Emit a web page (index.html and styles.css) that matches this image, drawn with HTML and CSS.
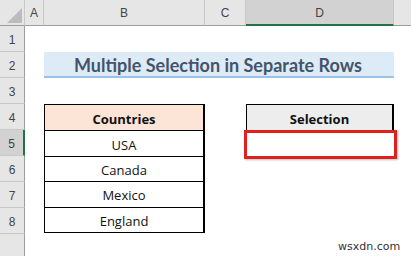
FILE: index.html
```html
<!DOCTYPE html>
<html>
<head>
<meta charset="utf-8">
<link rel="stylesheet" href="styles.css">
</head>
<body>
<div class="sheet">
  <div class="hdr corner"><span class="tri"></span></div>
  <div class="hdr col">A</div>
  <div class="hdr col">B</div>
  <div class="hdr col">C</div>
  <div class="hdr col sel">D</div>
  <div class="hdr col last"></div>

  <div class="hdr row r1">1</div>
  <div class="hdr row r2">2</div>
  <div class="hdr row r3">3</div>
  <div class="hdr row r4">4</div>
  <div class="hdr row r5 rsel">5</div>
  <div class="hdr row r6">6</div>
  <div class="hdr row r7">7</div>
  <div class="hdr row r8">8</div>
  <div class="hdr row r9"></div>

  <div class="title">Multiple Selection in Separate Rows</div>

  <div class="list">
    <div class="item head">Countries</div>
    <div class="item">USA</div>
    <div class="item">Canada</div>
    <div class="item">Mexico</div>
    <div class="item">England</div>
  </div>

  <div class="selhead">Selection</div>
  <div class="selcell"></div>
</div>
<div class="mark">wsxdn.com</div>
</body>
</html>
```
FILE: styles.css
```css
html, body {
  margin: 0;
  padding: 0;
  background: #fff;
  width: 411px;
  height: 256px;
  overflow: hidden;
  font-family: "Open Sans", "Liberation Sans", sans-serif;
}
.sheet {
  display: grid;
  grid-template-columns: 25px 19px 161px 41px 148px 17px;
  grid-template-rows: 26px repeat(8, 26px) 22px;
  position: relative;
}
.hdr {
  box-sizing: border-box;
  background: #e6e6e6;
  color: #444;
  font-size: 12px;
  display: flex;
  align-items: center;
  justify-content: center;
  font-family: "Liberation Sans", sans-serif;
}
.corner {
  grid-column: 1;
  grid-row: 1;
  border-right: 1px solid #c8c8c8;
  border-bottom: 1px solid #9e9e9e;
  position: relative;
}
.tri {
  position: absolute;
  right: 2px;
  bottom: 2px;
  width: 0;
  height: 0;
  border-left: 15px solid transparent;
  border-bottom: 15px solid #bcbcbc;
}
.col {
  grid-row: 1;
  border-right: 1px solid #c8c8c8;
  border-bottom: 1px solid #9e9e9e;
  padding-top: 1px;
}
.col.sel {
  background: #d2d2d2;
  border-bottom: 2px solid #217346;
  color: #444;
}
.col.last {
  border-right: none;
}
.row {
  grid-column: 1;
  border-right: 1px solid #9e9e9e;
  border-bottom: 1px solid #c8c8c8;
  padding-top: 3px;
}
.r1 { grid-row: 2; }
.r2 { grid-row: 3; }
.r3 { grid-row: 4; }
.r4 { grid-row: 5; }
.r5 { grid-row: 6; }
.r6 { grid-row: 7; }
.r7 { grid-row: 8; }
.r8 { grid-row: 9; }
.r9 { grid-row: 10; border-bottom: none; }
.rsel {
  background: #d2d2d2;
  border-right: 2px solid #217346;
}
.title {
  grid-column: 3 / 6;
  grid-row: 3;
  background: #ddebf7;
  border-bottom: 2px solid #9bc2e6;
  color: #44546a;
  font-family: "Lato", "Open Sans", sans-serif;
  font-weight: bold;
  font-size: 18px;
  display: flex;
  align-items: center;
  justify-content: center;
  padding-top: 1px;
  padding-right: 2px;
  box-sizing: border-box;
}
.list {
  grid-column: 3;
  grid-row: 5 / 10;
  border: 1px solid #000;
  border-right: 2px solid #000;
  display: grid;
  grid-template-rows: repeat(5, 1fr);
  margin-bottom: 1px;
}
.item {
  border-top: 1px solid #000;
  display: flex;
  align-items: center;
  justify-content: center;
  font-size: 13px;
  color: #111;
  padding-top: 2px;
  font-family: "Open Sans", sans-serif;
}
.item.head {
  border-top: none;
  background: #fce4d6;
  font-weight: bold;
}
.selhead {
  grid-column: 5;
  grid-row: 5;
  background: #ededed;
  border: 1px solid #000;
  border-right: 2px solid #000;
  border-bottom: none;
  display: flex;
  align-items: center;
  justify-content: center;
  font-size: 13px;
  font-weight: bold;
  color: #111;
  padding-top: 2px;
}
.selcell {
  grid-column: 5;
  grid-row: 6;
  position: relative;
}
.selcell::after {
  content: "";
  position: absolute;
  left: -2px;
  top: 0;
  right: -3px;
  bottom: -3px;
  border: 3px solid #e0201e;
  box-shadow: 1px 1px 2px rgba(0,0,0,0.25);
}
.mark {
  position: absolute;
  left: 338px;
  top: 240px;
  font-family: "DejaVu Sans", sans-serif;
  font-size: 11px;
  color: #333;
  text-shadow: 0 0 2px #fff, 0 0 2px #fff;
}
```
